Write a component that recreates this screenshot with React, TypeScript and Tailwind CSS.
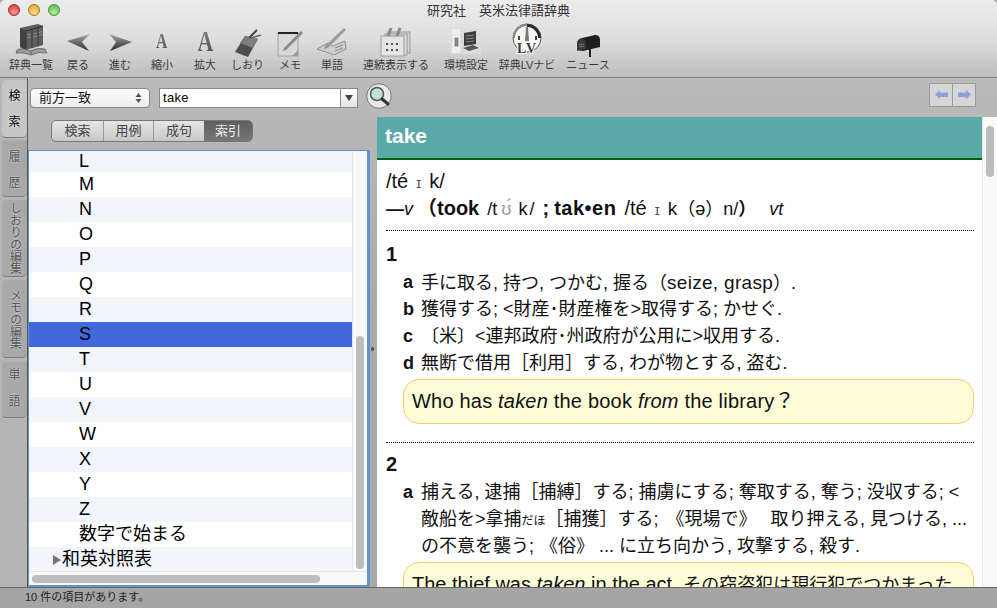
import React from "react";

const jp = "font-['Liberation_Sans','Noto_Sans_CJK_JP',sans-serif]";

function BooksIcon() {
  return (
    <svg width="34" height="34" viewBox="0 0 34 34">
      <path d="M6 5 L24 1 L29 3 L29 22 L12 27 L6 24 Z" fill="#5c5f5e" />
      <path d="M6 5 L12 8 L12 27 L6 24 Z" fill="#3f4241" />
      <path d="M12 8 L29 3" stroke="#2b2d2c" strokeWidth="1" />
      <path d="M12 8 L12 27 M18 6.5 L18 25 M24 5 L24 23.5" stroke="#383b3a" strokeWidth="1" />
      <path d="M13 12 L17 11 M19 11 L23 10 M25 9.5 L28 8.5 M13 15 L17 14 M19 14 L23 13 M25 12.5 L28 11.5" stroke="#8d908e" strokeWidth="1" />
      <path d="M3 27 Q9 24 16 28 Q24 24 31 26 L33 30 Q24 28 17 32 Q9 29 2 30 Z" fill="#9a9c98" stroke="#505250" strokeWidth="0.7" />
      <path d="M17 28 L17 32" stroke="#505250" strokeWidth="0.7" />
    </svg>
  );
}
function BackIcon() {
  return (
    <svg width="23" height="17" viewBox="0 0 23 17">
      <defs>
        <linearGradient id="bk" x1="0" y1="0" x2="0" y2="1">
          <stop offset="0" stopColor="#a8a8a8" /><stop offset="1" stopColor="#2e2e2e" />
        </linearGradient>
      </defs>
      <path d="M0 7 L23 0 L15 8 L22 17 Z" fill="url(#bk)" />
    </svg>
  );
}
function ForwardIcon() {
  return (
    <svg width="23" height="17" viewBox="0 0 23 17">
      <defs>
        <linearGradient id="fw" x1="0" y1="0" x2="0" y2="1">
          <stop offset="0" stopColor="#a8a8a8" /><stop offset="1" stopColor="#262626" />
        </linearGradient>
      </defs>
      <path d="M23 8 L0 0 L7 8 L1 17 Z" fill="url(#fw)" />
    </svg>
  );
}
function LetterA({ size }: { size: "s" | "l" }) {
  return (
    <span
      className={`inline-block scale-x-75 font-['Liberation_Serif',serif] font-bold bg-gradient-to-b from-[#8c8c8c] to-[#4a4a4a] bg-clip-text text-transparent ${size === "s" ? "text-[21px] leading-[24px]" : "text-[29px] leading-[32px]"}`}
    >
      A
    </span>
  );
}
function TagIcon() {
  return (
    <svg width="28" height="28" viewBox="0 0 28 28">
      <path d="M11 7 L24 10 L14 28 L1 23 Z" fill="#4d4d4d" />
      <path d="M11 7 L24 10 L19 19 L6 14 Z" fill="#7d7d7d" />
      <path d="M15 9 L23 1" stroke="#444" strokeWidth="2" />
      <path d="M17 9 L27 6" stroke="#666" strokeWidth="1.5" />
    </svg>
  );
}
function MemoIcon() {
  return (
    <svg width="26" height="26" viewBox="0 0 26 26">
      <rect x="1" y="2" width="20" height="23" fill="#d8d8d8" stroke="#a0a0a0" />
      <rect x="1" y="1" width="20" height="2" fill="#222" />
      <path d="M15 25 L21 19 L21 25 Z" fill="#9a9a9a" />
      <path d="M7 17 L24 0 L26 2 L9 19 L6 20 Z" fill="#8a8a8a" />
    </svg>
  );
}
function WordIcon() {
  return (
    <svg width="30" height="27" viewBox="0 0 30 27">
      <path d="M0 21 L11 15 L16 18 L28 13 L29 21 L17 27 L9 24 Z" fill="#cfcfcf" stroke="#7d7d7d" strokeWidth="0.8" />
      <path d="M8 18 L27 0 L29 2 L11 20 L7 21 Z" fill="#9a9a9a" />
      <path d="M18 20 L26 17 M18 23 L26 20" stroke="#8a8a8a" />
    </svg>
  );
}
function CalendarIcon() {
  return (
    <svg width="32" height="30" viewBox="0 0 32 30">
      <rect x="8" y="5" width="22" height="21" fill="#d2d2d2" stroke="#9c9c9c" />
      <rect x="5" y="7" width="22" height="21" fill="#dcdcdc" stroke="#9c9c9c" />
      <rect x="1" y="9" width="23" height="20" fill="#e4e4e4" stroke="#9c9c9c" />
      <path d="M8 9 L11 1 M17 9 L20 1" stroke="#8a8a8a" strokeWidth="3" />
      <g fill="#555">
        <rect x="6" y="16" width="2" height="2" /><rect x="11" y="16" width="2" height="2" /><rect x="16" y="16" width="2" height="2" />
        <rect x="6" y="22" width="2" height="2" /><rect x="11" y="22" width="2" height="2" /><rect x="16" y="22" width="2" height="2" />
      </g>
    </svg>
  );
}
function SettingsIcon() {
  return (
    <svg width="30" height="26" viewBox="0 0 30 26">
      <rect x="0" y="0" width="30" height="26" fill="#dcdcdc" />
      <rect x="1" y="1" width="8" height="24" fill="#eeeeee" />
      <rect x="4" y="10" width="3" height="8" fill="#8c8c8c" stroke="#555" strokeWidth="0.5" />
      <path d="M13 5 L25 3 L25 16 L13 18 Z" fill="#3d3d3d" />
      <path d="M15 8 L23 7 M15 11 L23 10 M15 14 L23 13" stroke="#888" />
      <path d="M12 20 L22 17 L28 20 L18 23 Z" fill="#555" />
    </svg>
  );
}
function ClockIcon() {
  return (
    <svg width="34" height="34" viewBox="0 0 34 34">
      <circle cx="17" cy="15" r="14" fill="#f6f6f6" stroke="#5a5a5a" strokeWidth="1" />
      <path d="M17 1 A14 14 0 0 1 31 15 L28 15 A11 11 0 0 0 17 4 Z" fill="#2a2a2a" />
      <path d="M3 15 A14 14 0 0 1 17 1 L17 3 A12 12 0 0 0 5 15 Z" fill="#8a8a8a" />
      <path d="M16 4 L18 4 L19 18 L15 18 Z" fill="#7a7a7a" />
      <rect x="8" y="13" width="2" height="4" fill="#444" />
      <rect x="25" y="13" width="2" height="4" fill="#444" />
      <text x="17" y="30" textAnchor="middle" fontFamily="Liberation Serif" fontWeight="bold" fontSize="14" letterSpacing="1" fill="#3c3c3c" stroke="#ffffff" strokeWidth="2" paintOrder="stroke">LV</text>
    </svg>
  );
}
function MailboxIcon() {
  return (
    <svg width="25" height="22" viewBox="0 0 25 22">
      <path d="M1 9 Q1 4 6 3 L19 0 Q24 0 24 5 L24 12 L7 16 L1 15 Z" fill="#1f1f1f" />
      <path d="M1 9 Q1 4 6 4 Q10 4 10 9 L10 14 L1 16 Z" fill="#3a3a3a" />
      <path d="M3 10 L8 9 M3 12 L8 11" stroke="#777" />
      <rect x="13" y="14" width="2" height="8" fill="#222" />
    </svg>
  );
}

function Tool({ label, width, ml = 0, pb = 0, children }: { label: string; width: number; ml?: number; pb?: number; children: React.ReactNode }) {
  return (
    <div className="flex flex-col items-center shrink-0" style={{ width, marginLeft: ml }}>
      <div className="h-[34px] flex items-end justify-center" style={{ paddingBottom: pb }}>{children}</div>
      <div className="mt-[1px] text-[11px] leading-[15px] text-[#3a3a3a] whitespace-nowrap">{label}</div>
    </div>
  );
}

function SideTab({ chars, active, vertical, cls }: { chars: string; active?: boolean; vertical?: boolean; cls: string }) {
  return (
    <div
      className={`w-[25px] ml-[2px] flex flex-col items-center rounded-l-[4px] rounded-br-[5px] border-b border-[#7d7d7d] text-[12px] ${cls} ${
        active ? "bg-[#c6c6c6] text-black [text-shadow:0_0_3px_#ffffff]" : "bg-[#a8a8a8] text-[#555555] [text-shadow:0_0_2px_#e8e8e8]"
      }`}
    >
      {vertical ? (
        <span className="[writing-mode:vertical-rl] text-[12px] leading-[16px]">{chars}</span>
      ) : (
        chars.split("").map((c, i) => <span key={i}>{c}</span>)
      )}
    </div>
  );
}

const rows = ["L", "M", "N", "O", "P", "Q", "R", "S", "T", "U", "V", "W", "X", "Y", "Z", "数字で始まる"];

function Line({ k, children }: { k?: string; children: React.ReactNode }) {
  return (
    <div className="flex h-[27px] items-center whitespace-nowrap">
      <span className="w-[18px] shrink-0 font-bold">{k}</span>
      <span>{children}</span>
    </div>
  );
}

function Dotted() {
  return <div className="border-t border-dotted border-black" />;
}

function Small() {
  return <span className="text-[#555555] text-[14px] mx-[8px]">ɪ</span>;
}

export default function App() {
  return (
    <div className={`${jp} w-[997px] h-[608px] overflow-hidden flex flex-col bg-[#aaaaaa] text-black`}>
      {/* title + toolbar */}
      <div className="h-[78px] shrink-0 border-b border-[#7f7f7f] bg-gradient-to-b from-[#ececec] via-[#dedede] to-[#bdbdbd] flex flex-col rounded-t-[5px]">
        <div className="h-[24px] shrink-0 flex items-center relative justify-center">
          <div className="absolute left-[8px] top-[4px] flex gap-[8px]">
            <span className="w-[12px] h-[12px] rounded-full border border-[#a03030] bg-[radial-gradient(circle_at_50%_75%,#ff9a9a,#d42a30)]" />
            <span className="w-[12px] h-[12px] rounded-full border border-[#a87820] bg-[radial-gradient(circle_at_50%_75%,#ffdc8a,#e09a20)]" />
            <span className="w-[12px] h-[12px] rounded-full border border-[#4a9040] bg-[radial-gradient(circle_at_50%_75%,#b4f09a,#4eae40)]" />
          </div>
          <span className="text-[13px] text-[#333333] -mt-[2px]">研究社　英米法律語辞典</span>
        </div>
        <div className="flex items-start pl-[9px] -mt-[1px]">
          <Tool label="辞典一覧" width={44}><BooksIcon /></Tool>
          <Tool label="戻る" width={46} ml={2} pb={6}><BackIcon /></Tool>
          <Tool label="進む" width={38} pb={6}><ForwardIcon /></Tool>
          <Tool label="縮小" width={46} pb={4}><LetterA size="s" /></Tool>
          <Tool label="拡大" width={40} pb={0}><LetterA size="l" /></Tool>
          <Tool label="しおり" width={45}><TagIcon /></Tool>
          <Tool label="メモ" width={40}><MemoIcon /></Tool>
          <Tool label="単語" width={44} pb={2}><WordIcon /></Tool>
          <Tool label="連続表示する" width={66} ml={9}><CalendarIcon /></Tool>
          <Tool label="環境設定" width={46} ml={14} pb={3}><SettingsIcon /></Tool>
          <Tool label="辞典LVナビ" width={60} ml={8}><ClockIcon /></Tool>
          <Tool label="ニュース" width={56} ml={3}><MailboxIcon /></Tool>
        </div>
      </div>

      {/* main */}
      <div className="flex-1 min-h-0 flex">
        {/* side tabs */}
        <div className="w-[28px] shrink-0 border-r border-[#555555] bg-[#b5b5b5] flex flex-col">
          <SideTab chars="検索" active cls="h-[58px] mt-[2px] pt-[9px] gap-[12px] leading-[14px]" />
          <SideTab chars="履歴" cls="h-[57px] mt-[2px] pt-[10px] gap-[12px] leading-[14px]" />
          <SideTab chars="しおりの編集" vertical cls="h-[77px] mt-[3px] pt-[2px]" />
          <SideTab chars="メモの編集" vertical cls="h-[78px] mt-[3px] pt-[9px]" />
          <SideTab chars="単語" cls="h-[56px] mt-[4px] pt-[6px] gap-[13px] leading-[14px]" />
        </div>

        <div className="flex-1 min-w-0 flex flex-col bg-gradient-to-b from-[#bababa] via-[#a9a9a9] to-[#a8a8a8]">
          {/* search row */}
          <div className="h-[39px] shrink-0 flex items-center relative">
            <div className="ml-[2px] w-[120px] h-[20px] rounded-[4px] bg-gradient-to-b from-white to-[#ececec] border border-[#8a8a8a] flex items-center justify-between pl-[8px] pr-[7px]">
              <span className="text-[13px] text-[#111111]">前方一致</span>
              <svg width="7" height="12" viewBox="0 0 7 12"><path d="M3.5 1 L6.5 5 L0.5 5 Z M3.5 11 L6.5 7 L0.5 7 Z" fill="#555" /></svg>
            </div>
            <div className="ml-[9px] w-[199px] h-[20px] flex border border-[#8a8a8a] bg-white">
              <div className="flex-1 text-[13px] font-medium leading-[18px] pl-[3px] tracking-[0.3px]">take</div>
              <div className="w-[17px] border-l border-[#8a8a8a] bg-gradient-to-b from-white to-[#e4e4e4] flex items-center justify-center">
                <svg width="8" height="6" viewBox="0 0 8 6"><path d="M0 0 L8 0 L4 6 Z" fill="#444" /></svg>
              </div>
            </div>
            <svg className="ml-[8px] -mt-[4px]" width="26" height="26" viewBox="0 0 26 26">
              <circle cx="13" cy="13" r="12.3" fill="#e8e8e8" stroke="#777" />
              <circle cx="11" cy="11" r="6.5" fill="#bfe0dc" stroke="#555" strokeWidth="1.5" />
              <path d="M16 16 L22 21" stroke="#333" strokeWidth="3" strokeLinecap="round" />
            </svg>
            <div className="ml-auto mr-[21px] -mt-[6px] flex border border-[#9a9a9a] bg-[#d6d6d6] h-[24px]">
              <div className="w-[23px] border-r border-[#9a9a9a] flex items-center justify-center">
                <svg width="13" height="9" viewBox="0 0 13 9"><path d="M0 4.5 L5 0 L5 2.5 L13 2.5 L13 7 L5 7 L5 9 Z" fill="#8f9fd8" /></svg>
              </div>
              <div className="w-[22px] flex items-center justify-center">
                <svg width="13" height="9" viewBox="0 0 13 9"><path d="M13 4.5 L8 0 L8 2.5 L0 2.5 L0 7 L8 7 L8 9 Z" fill="#8f9fd8" /></svg>
              </div>
            </div>
          </div>

          <div className="flex-1 min-h-0 flex">
            {/* left panel */}
            <div className="w-[342px] shrink-0 flex flex-col">
              <div className="flex h-[22px] ml-[23px] mt-[3px] w-[202px] rounded-[5px] border border-[#777777] overflow-hidden text-[13px] text-[#444444] bg-gradient-to-b from-[#e6e6e6] to-[#c8c8c8]">
                <div className="w-[52px] flex items-center justify-center border-r border-[#9a9a9a]">検索</div>
                <div className="w-[50px] flex items-center justify-center border-r border-[#9a9a9a]">用例</div>
                <div className="w-[50px] flex items-center justify-center">成句</div>
                <div className="flex-1 flex items-center justify-center text-[#eeeeee] bg-gradient-to-b from-[#5e5e5e] to-[#777777]">索引</div>
              </div>
              <div className="mt-[8px] flex-1 min-h-0 flex flex-col border-l border-r-[3px] border-t border-b-2 border-[#5f94cf] bg-[#f6f6f6] overflow-hidden">
                <div className="flex-1 min-h-0 flex">
                  <div className="flex-1 min-w-0 text-[18px] leading-[25px] flex flex-col">
                    <div className="h-[21px] bg-[#f2f5fa] pl-[50px] shrink-0 flex items-end leading-[22px]">L</div>
                    {rows.slice(1).map((r, i) => (
                      <div
                        key={r}
                        className={`h-[25px] shrink-0 pl-[50px] ${
                          r === "S" ? "bg-[#4169dc]" : i % 2 === 0 ? "bg-white" : "bg-[#f2f5fa]"
                        }`}
                      >
                        {r}
                      </div>
                    ))}
                    <div className="h-[25px] shrink-0 bg-[#f2f5fa] flex items-center pl-[24px]">
                      <svg width="9" height="10" viewBox="0 0 9 10" className="shrink-0"><path d="M0 0 L8 5 L0 10 Z" fill="#777" /></svg>
                      <span>和英対照表</span>
                    </div>
                  </div>
                  <div className="w-[15px] shrink-0 flex flex-col justify-end items-center pb-[2px] bg-[#f8f8f8] border-l border-[#e6e6e6]">
                    <div className="w-[8px] h-[233px] rounded-full bg-[#bdbdbd]" />
                  </div>
                </div>
                <div className="h-[14px] shrink-0 flex items-center pl-[3px] bg-[#f8f8f8] border-t border-[#e6e6e6]">
                  <div className="w-[288px] h-[8px] rounded-full bg-[#bdbdbd]" />
                </div>
              </div>
            </div>

            {/* splitter */}
            <div className="w-[7px] shrink-0 flex items-center justify-start pl-[1px]">
              <span className="w-[3px] h-[4px] rounded-full bg-[#555555] mb-[6px]" />
            </div>

            {/* right panel */}
            <div className="flex-1 min-w-0 flex bg-white overflow-hidden">
              <div className="flex-1 min-w-0 flex flex-col">
                <div className="h-[43px] shrink-0 bg-[#5aa9a9] border-b-2 border-[#006400] pl-[8px] text-[21px] font-bold text-white leading-[38px]">take</div>
                <div className="pl-[9px] pr-[8px] text-[18px] leading-[27px] text-[#111111]">
                  <div className="mt-[8px] h-[27px]"><span className="text-[20px]">/té</span><Small /><span className="text-[20px]">k/</span></div>
                  <div className="whitespace-nowrap h-[27px]">
                    <b>—</b><i>v</i><b className="text-[20px] ml-[4px]">（took</b>
                    <span className="ml-[8px]">/t</span><span className="text-[#999999] mx-[4px]">ʊ́</span><span className="ml-[3px] tracking-[2px]">k/</span>
                    <b className="text-[20px] ml-[6px]">;</b>
                    <b className="text-[20px] tracking-[0.5px] ml-[5px]">tak•en</b>
                    <span className="ml-[8px] text-[20px]">/té</span><Small /><span className="text-[19px]">k</span>（ə）n/<b>）</b><i className="ml-[13px]">vt</i>
                  </div>
                  <div className="mt-[8px]"><Dotted /></div>
                  <div className="mt-[10px] font-bold text-[20px] leading-[27px]">1</div>
                  <div className="pl-[17px] mt-[1px]">
                    <Line k="a">手に取る, 持つ, つかむ, 握る（<span className="text-[19px] tracking-[0.3px]">seize, grasp</span>）.</Line>
                    <Line k="b">獲得する; &lt;財産･財産権を&gt;取得する; かせぐ.</Line>
                    <Line k="c">〔米〕&lt;連邦政府･州政府が公用に&gt;収用する.</Line>
                    <Line k="d">無断で借用［利用］する, わが物とする, 盗む.</Line>
                    <div className="mt-[2px] h-[45px] rounded-[16px] border border-[#f5cc70] bg-[#fdfcd8] pl-[8px] text-[20px] tracking-[0.2px] leading-[43px] whitespace-nowrap">
                      Who has <i>taken</i> the book <i>from</i> the library？
                    </div>
                  </div>
                  <div className="mt-[18px]"><Dotted /></div>
                  <div className="mt-[8px] font-bold text-[20px] leading-[27px]">2</div>
                  <div className="pl-[17px] mt-[1px]">
                    <Line k="a">捕える, 逮捕［捕縛］する; 捕虜にする; 奪取する, 奪う; 没収する; &lt;</Line>
                    <div className="pl-[18px] h-[27px] whitespace-nowrap">敵船を&gt;拿捕<span className="text-[12px]">だほ</span>［捕獲］する;<span className="ml-[8px]">《現場で》</span><span className="ml-[14px]">取り押える, 見つける, ...</span></div>
                    <div className="pl-[18px] h-[27px] whitespace-nowrap">の不意を襲う;<span className="ml-[6px]">《俗》</span> ... に立ち向かう, 攻撃する, 殺す.</div>
                    <div className="mt-[2px] h-[46px] rounded-[16px] border border-[#f5cc70] bg-[#fdfcd8] pl-[8px] text-[20px] leading-[43px] whitespace-nowrap overflow-hidden">
                      The thief was <i>taken</i> in the act. <span className="text-[18px]">その窃盗犯は現行犯でつかまった</span>
                    </div>
                  </div>
                </div>
              </div>
              <div className="w-[15px] shrink-0 bg-[#f8f8f8] border-l border-[#e8e8e8] flex justify-center pt-[9px]">
                <div className="w-[8px] h-[51px] rounded-full bg-[#bdbdbd]" />
              </div>
            </div>
          </div>
        </div>
      </div>

      {/* status */}
      <div className="h-[21px] shrink-0 border-t border-[#666666] bg-[#a5a5a5] pl-[25px] text-[11px] leading-[19px] text-[#222222]">10 件の項目があります。</div>
    </div>
  );
}
